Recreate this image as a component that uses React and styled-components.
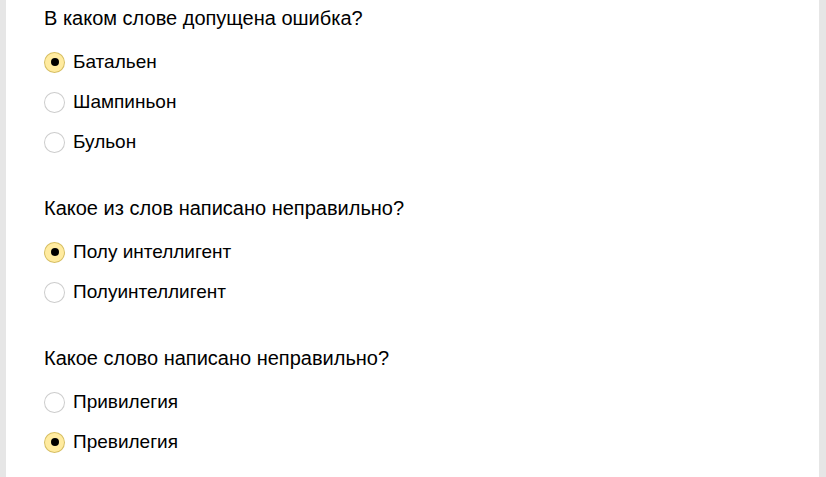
import styled, { createGlobalStyle } from 'styled-components';

const GlobalStyle = createGlobalStyle`
  html, body {
    margin: 0;
    padding: 0;
    background: #e6e6e6;
  }
  body {
    font-family: "Liberation Sans", Arial, sans-serif;
    color: #000;
  }
`;

const Panel = styled.div`
  margin: 0 7px 0 6px;
  min-height: 477px;
  box-sizing: border-box;
  background: #fff;
  padding: 6px 0 0 38px;
`;

const Question = styled.div`
  & + & {
    margin-top: 34px;
  }
`;

const Title = styled.div`
  font-size: 20px;
  line-height: 24px;
  margin-bottom: 12px;
`;

const Option = styled.label`
  display: flex;
  align-items: center;
  gap: 8px;
  height: 40px;
  font-size: 19px;
  cursor: pointer;
`;

const RadioBox = styled.span`
  position: relative;
  flex: none;
  width: 21px;
  height: 21px;
  box-sizing: border-box;
  border-radius: 50%;
  border: 1px solid
    ${({ $checked }) => ($checked ? 'rgba(153, 122, 0, 0.4)' : 'rgba(0, 0, 0, 0.2)')};
  background: ${({ $checked }) => ($checked ? '#ffeba0' : '#fff')};

  &::after {
    content: '';
    display: ${({ $checked }) => ($checked ? 'block' : 'none')};
    position: absolute;
    top: 50%;
    left: 50%;
    width: 8px;
    height: 8px;
    margin: -4px 0 0 -4px;
    border-radius: 50%;
    background: #000;
  }
`;

const questions = [
  {
    title: 'В каком слове допущена ошибка?',
    options: ['Батальен', 'Шампиньон', 'Бульон'],
    checked: 0,
  },
  {
    title: 'Какое из слов написано неправильно?',
    options: ['Полу интеллигент', 'Полуинтеллигент'],
    checked: 0,
  },
  {
    title: 'Какое слово написано неправильно?',
    options: ['Привилегия', 'Превилегия'],
    checked: 1,
  },
];

export default function App() {
  return (
    <>
      <GlobalStyle />
      <Panel>
        {questions.map((q) => (
          <Question key={q.title}>
            <Title>{q.title}</Title>
            {q.options.map((opt, i) => (
              <Option key={opt}>
                <RadioBox $checked={i === q.checked} />
                {opt}
              </Option>
            ))}
          </Question>
        ))}
      </Panel>
    </>
  );
}
